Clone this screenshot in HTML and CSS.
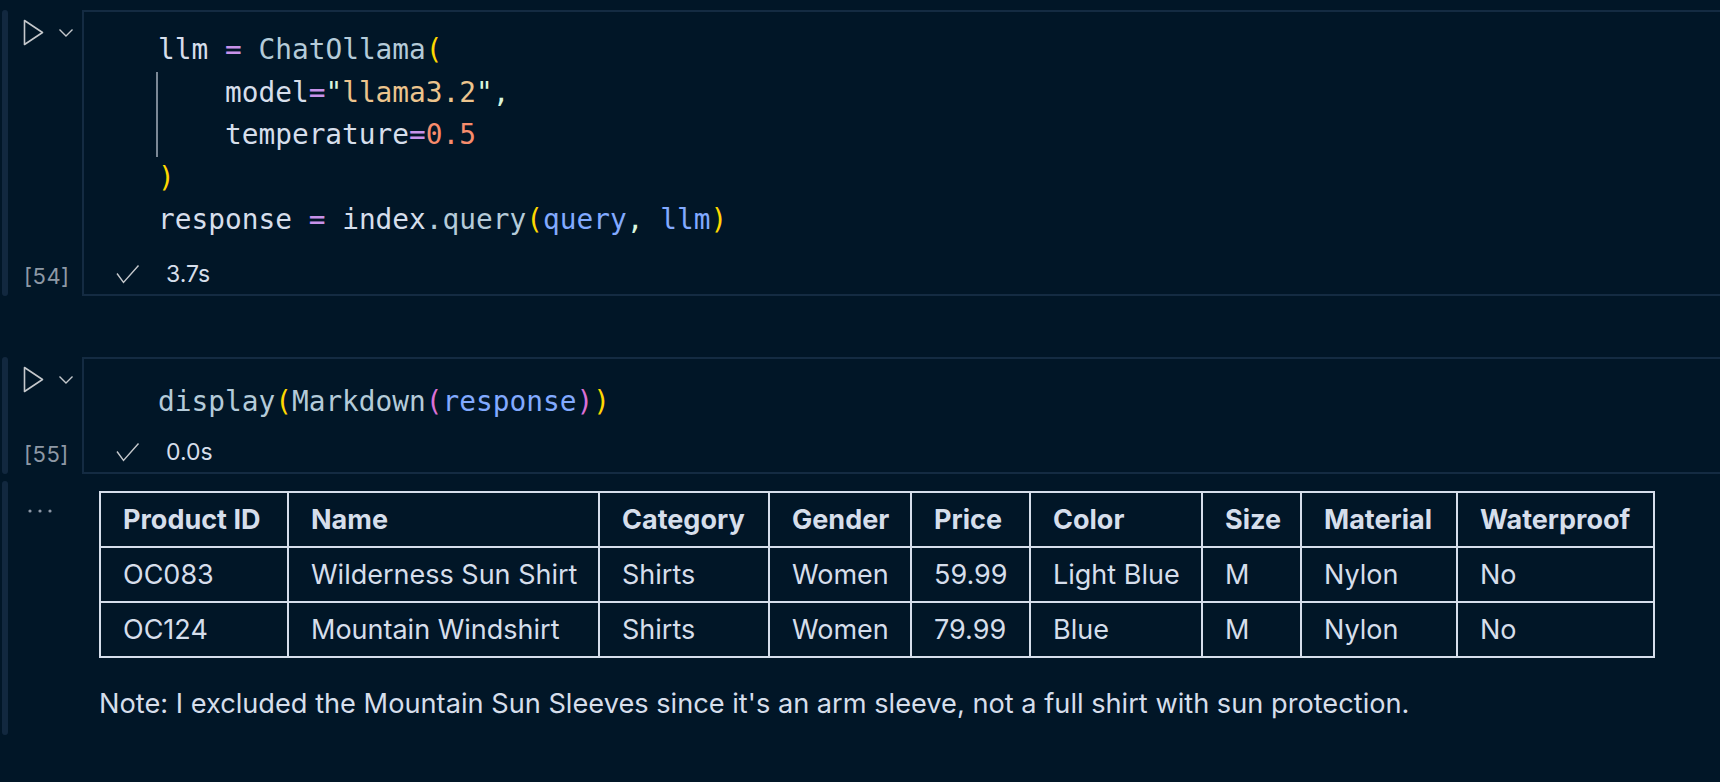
FILE: index.html
```html
<!DOCTYPE html>
<html>
<head>
<meta charset="utf-8">
<link rel="stylesheet" href="styles.css">
</head>
<body>
<div class="nb">
  <div class="cell">
    <div class="bar"></div>
    <div class="gutter">
      <div class="run">
        <svg class="tri" width="22" height="28" viewBox="0 0 22 28"><polygon points="1.5,1.5 19.5,13.5 1.5,25.5" fill="none" stroke="#c5c8cc" stroke-width="1.6" stroke-linejoin="round"/></svg>
        <svg class="chev" width="16" height="10" viewBox="0 0 16 10"><polyline points="1.5,1.5 8,8 14.5,1.5" fill="none" stroke="#c5c8cc" stroke-width="1.4"/></svg>
      </div>
      <div class="count">[54]</div>
    </div>
    <div class="box">
      <div class="code multi">
        <div class="ln"><span class="v">llm</span> <span class="op">=</span> <span class="fn">ChatOllama</span><span class="b1">(</span></div>
        <div class="guide">
          <div class="ln">    <span class="v">model</span><span class="op">=</span><span class="q">"</span><span class="s">llama3.2</span><span class="q">",</span></div>
          <div class="ln">    <span class="v">temperature</span><span class="op">=</span><span class="n">0.5</span></div>
        </div>
        <div class="ln"><span class="b1">)</span></div>
        <div class="ln"><span class="v">response</span> <span class="op">=</span> <span class="v">index</span><span class="fn">.query</span><span class="b1">(</span><span class="a">query</span><span class="q">,</span> <span class="a">llm</span><span class="b1">)</span></div>
      </div>
      <div class="status">
        <svg class="check" width="24" height="20" viewBox="0 0 24 20"><polyline points="1,9.5 7.5,18.5 22.5,1.5" fill="none" stroke="#c5c8cc" stroke-width="1.4"/></svg>
        <span class="time">3.7s</span>
      </div>
    </div>
  </div>

  <div class="cell second">
    <div class="bar"></div>
    <div class="gutter">
      <div class="run">
        <svg class="tri" width="22" height="28" viewBox="0 0 22 28"><polygon points="1.5,1.5 19.5,13.5 1.5,25.5" fill="none" stroke="#c5c8cc" stroke-width="1.6" stroke-linejoin="round"/></svg>
        <svg class="chev" width="16" height="10" viewBox="0 0 16 10"><polyline points="1.5,1.5 8,8 14.5,1.5" fill="none" stroke="#c5c8cc" stroke-width="1.4"/></svg>
      </div>
      <div class="count">[55]</div>
    </div>
    <div class="box">
      <div class="code single">
        <div class="ln"><span class="fn">display</span><span class="b1">(</span><span class="fn">Markdown</span><span class="b2">(</span><span class="a">response</span><span class="b2">)</span><span class="b1">)</span></div>
      </div>
      <div class="status">
        <svg class="check" width="24" height="20" viewBox="0 0 24 20"><polyline points="1,9.5 7.5,18.5 22.5,1.5" fill="none" stroke="#c5c8cc" stroke-width="1.4"/></svg>
        <span class="time">0.0s</span>
      </div>
    </div>
  </div>

  <div class="output">
    <div class="bar"></div>
    <div class="gutter out-gutter">
      <svg class="dots" width="26" height="6" viewBox="0 0 26 6"><circle cx="3" cy="3" r="1.6" fill="#8b96a5"/><circle cx="13" cy="3" r="1.6" fill="#8b96a5"/><circle cx="23" cy="3" r="1.6" fill="#8b96a5"/></svg>
    </div>
    <div class="out-body">
      <table class="tbl">
        <colgroup>
          <col class="c1"><col class="c2"><col class="c3"><col class="c4"><col class="c5"><col class="c6"><col class="c7"><col class="c8"><col class="c9">
        </colgroup>
        <thead>
          <tr><th>Product ID</th><th>Name</th><th>Category</th><th>Gender</th><th>Price</th><th>Color</th><th>Size</th><th>Material</th><th>Waterproof</th></tr>
        </thead>
        <tbody>
          <tr><td>OC083</td><td>Wilderness Sun Shirt</td><td>Shirts</td><td>Women</td><td>59.99</td><td>Light Blue</td><td>M</td><td>Nylon</td><td>No</td></tr>
          <tr><td>OC124</td><td>Mountain Windshirt</td><td>Shirts</td><td>Women</td><td>79.99</td><td>Blue</td><td>M</td><td>Nylon</td><td>No</td></tr>
        </tbody>
      </table>
      <p class="note">Note: I excluded the Mountain Sun Sleeves since it's an arm sleeve, not a full shirt with sun protection.</p>
    </div>
  </div>
</div>
</body>
</html>
```

FILE: styles.css
```css
html, body {
  margin: 0;
  padding: 0;
  background: #011627;
}
body {
  width: 1720px;
  height: 782px;
  overflow: hidden;
  font-family: Inter, "Noto Sans", sans-serif;
  color: #d6deeb;
}
.nb {
  padding-top: 10px;
}
.cell, .output {
  display: flex;
  align-items: stretch;
}
.second {
  margin-top: 61px;
}
.bar {
  width: 6px;
  margin-left: 2px;
  border-radius: 3px;
  background: #12283f;
  flex: none;
}
.gutter {
  width: 74px;
  flex: none;
  display: flex;
  flex-direction: column;
  justify-content: space-between;
}
.run {
  display: flex;
  align-items: flex-start;
  padding-top: 9px;
  padding-left: 15px;
}
.chev {
  margin-left: 13px;
  margin-top: 9px;
}
.count {
  height: 40px;
  display: flex;
  align-items: center;
  padding-left: 16px;
  font-size: 22px;
  letter-spacing: 0.5px;
  color: #8e99a6;
}
.box {
  flex: 1;
  margin-right: -20px;
  border: 2px solid #142b42;
  border-right: 0;
}
.code {
  padding: 19px 0 12px 74px;
  font-family: "DejaVu Sans Mono", "Liberation Mono", monospace;
  font-size: 27.8px;
  line-height: 42px;
  color: #d6deeb;
}
.code.multi {
  padding-top: 17px;
  padding-bottom: 12px;
}
.code.multi .ln {
  height: 42.5px;
  line-height: 42.5px;
}
.code.single {
  padding-top: 22px;
  padding-bottom: 9px;
}
.ln {
  white-space: pre;
  height: 42px;
}
.guide {
  margin-left: -2px;
  border-left: 2px solid #7b8896;
}
.v { color: #d6deeb; }
.op { color: #c792ea; }
.fn { color: #b4cbd9; }
.b1 { color: #ffd700; }
.b2 { color: #da70d6; }
.q { color: #d9f5dd; }
.s { color: #ecc48d; }
.n { color: #f78c6c; }
.a { color: #82aaff; }
.status {
  height: 40px;
  display: flex;
  align-items: center;
  padding-left: 32px;
}
.check {
  flex: none;
}
.time {
  margin-left: 26px;
  font-size: 23px;
  color: #d6deeb;
}
.output {
  margin-top: 7px;
}
.out-gutter {
  justify-content: flex-start;
}
.dots {
  margin-top: 27px;
  margin-left: 19px;
}
.out-body {
  padding: 10px 0 13px 17px;
}
.tbl {
  border-collapse: collapse;
  border: 2px solid #d6deeb;
  font-size: 27px;
  color: #d6deeb;
  table-layout: fixed;
  width: 1554px;
}
.tbl th, .tbl td {
  border: 2px solid #d6deeb;
  height: 55px;
  padding: 0 22px;
  text-align: left;
  white-space: nowrap;
  box-sizing: border-box;
}
.tbl th {
  font-weight: 700;
}
.tbl td {
  font-weight: 400;
}
.c1 { width: 188px; }
.c2 { width: 311px; }
.c3 { width: 170px; }
.c4 { width: 142px; }
.c5 { width: 119px; }
.c6 { width: 172px; }
.c7 { width: 99px; }
.c8 { width: 156px; }
.c9 { width: 197px; }
.note {
  margin: 28px 0 0 0;
  font-size: 27.2px;
  line-height: 36px;
  color: #d6deeb;
}
```
